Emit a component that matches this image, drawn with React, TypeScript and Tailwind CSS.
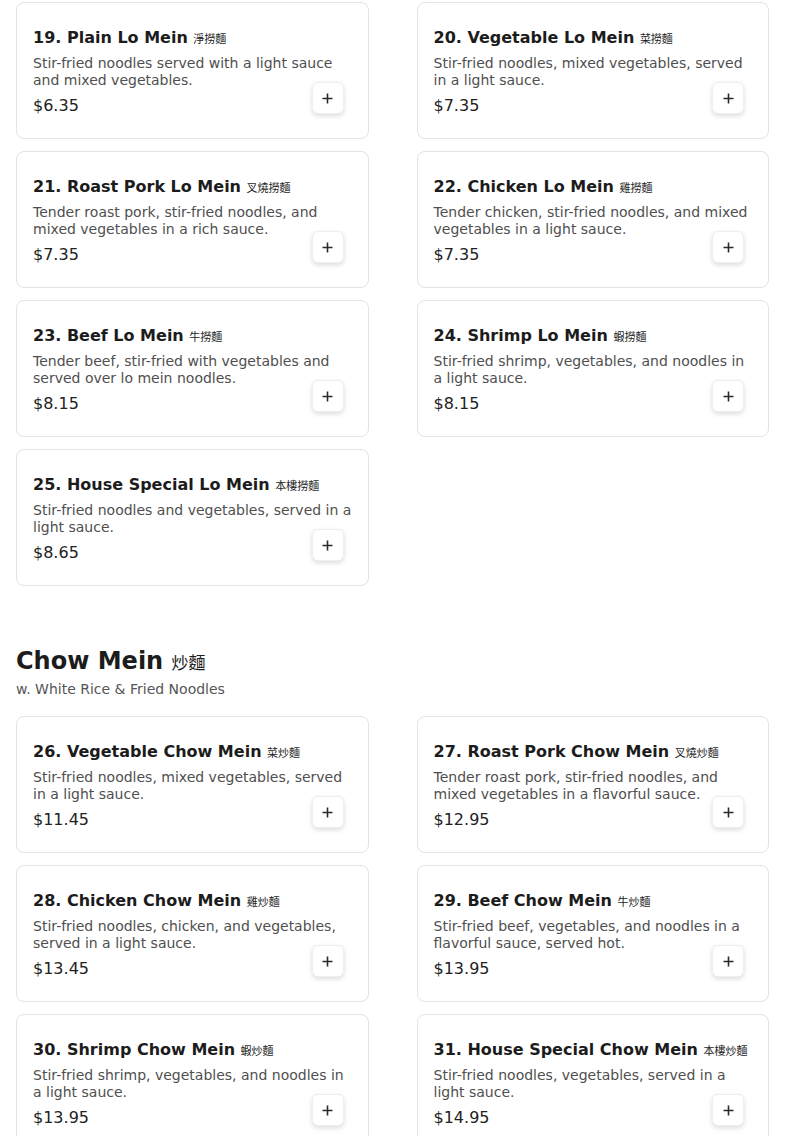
type Item = { num: number; name: string; zh: string; desc: string; price: string }

const LO_MEIN: Item[] = [
  { num: 19, name: 'Plain Lo Mein', zh: '淨撈麵', desc: 'Stir-fried noodles served with a light sauce and mixed vegetables.', price: '6.35' },
  { num: 20, name: 'Vegetable Lo Mein', zh: '菜撈麵', desc: 'Stir-fried noodles, mixed vegetables, served in a light sauce.', price: '7.35' },
  { num: 21, name: 'Roast Pork Lo Mein', zh: '叉燒撈麵', desc: 'Tender roast pork, stir-fried noodles, and mixed vegetables in a rich sauce.', price: '7.35' },
  { num: 22, name: 'Chicken Lo Mein', zh: '雞撈麵', desc: 'Tender chicken, stir-fried noodles, and mixed vegetables in a light sauce.', price: '7.35' },
  { num: 23, name: 'Beef Lo Mein', zh: '牛撈麵', desc: 'Tender beef, stir-fried with vegetables and served over lo mein noodles.', price: '8.15' },
  { num: 24, name: 'Shrimp Lo Mein', zh: '蝦撈麵', desc: 'Stir-fried shrimp, vegetables, and noodles in a light sauce.', price: '8.15' },
  { num: 25, name: 'House Special Lo Mein', zh: '本樓撈麵', desc: 'Stir-fried noodles and vegetables, served in a light sauce.', price: '8.65' },
]

const CHOW_MEIN: Item[] = [
  { num: 26, name: 'Vegetable Chow Mein', zh: '菜炒麵', desc: 'Stir-fried noodles, mixed vegetables, served in a light sauce.', price: '11.45' },
  { num: 27, name: 'Roast Pork Chow Mein', zh: '叉燒炒麵', desc: 'Tender roast pork, stir-fried noodles, and mixed vegetables in a flavorful sauce.', price: '12.95' },
  { num: 28, name: 'Chicken Chow Mein', zh: '雞炒麵', desc: 'Stir-fried noodles, chicken, and vegetables, served in a light sauce.', price: '13.45' },
  { num: 29, name: 'Beef Chow Mein', zh: '牛炒麵', desc: 'Stir-fried beef, vegetables, and noodles in a flavorful sauce, served hot.', price: '13.95' },
  { num: 30, name: 'Shrimp Chow Mein', zh: '蝦炒麵', desc: 'Stir-fried shrimp, vegetables, and noodles in a light sauce.', price: '13.95' },
  { num: 31, name: 'House Special Chow Mein', zh: '本樓炒麵', desc: 'Stir-fried noodles, vegetables, served in a light sauce.', price: '14.95' },
]

export default function App() {
  return (
    <div className="min-h-screen bg-white px-4 pt-[2px] pb-10 font-['DejaVu_Sans','Noto_Sans_CJK_TC',sans-serif]">
      {/* Lo Mein (heading scrolled off above) */}
      <div className="grid grid-cols-2 gap-x-12 gap-y-3">
        {LO_MEIN.map(item => <MenuCard key={item.num} item={item} />)}
      </div>

      {/* Chow Mein */}
      <section className="mt-[59px]">
        <h2 className="text-2xl font-bold leading-8 text-[#1c1c1c]">
          Chow Mein <span className="text-[17px] font-normal">炒麵</span>
        </h2>
        <p className="text-sm leading-5 text-[#555555]">w. White Rice &amp; Fried Noodles</p>
        <div className="mt-[17px] grid grid-cols-2 gap-x-12 gap-y-3">
          {CHOW_MEIN.map(item => <MenuCard key={item.num} item={item} />)}
        </div>
      </section>
    </div>
  )
}

function MenuCard({ item }: { item: Item }) {
  return (
    <div className="relative rounded-lg border border-[#e3e3e3] bg-white px-4 pt-[23px] pb-5">
      <h3 className="text-base font-bold leading-6 text-[#1c1c1c]">
        {item.num}. {item.name} <span className="text-[11px] font-normal">{item.zh}</span>
      </h3>
      <p className="mt-[3px] text-sm leading-[17px] text-[#4f4f4f]">{item.desc}</p>
      <p className="mt-[5px] text-base leading-6 text-[#222222]">${item.price}</p>
      <button
        aria-label={`Add ${item.name}`}
        className="absolute right-6 bottom-6 flex h-8 w-8 items-center justify-center rounded-md border border-[#efefef] bg-white shadow-[0_2px_5px_rgba(0,0,0,0.14)]"
      >
        <svg width="11" height="11" viewBox="0 0 11 11">
          <path d="M5.5 0.5v10M0.5 5.5h10" stroke="#2a2a2a" strokeWidth="1.6" />
        </svg>
      </button>
    </div>
  )
}
